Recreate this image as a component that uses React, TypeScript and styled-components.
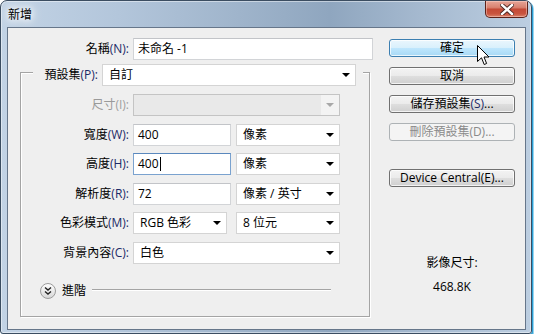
import React from 'react';
import styled, { createGlobalStyle, css } from 'styled-components';

const FONT = `"Open Sans", "Noto Sans CJK TC", sans-serif`;

const GlobalStyle = createGlobalStyle`
  html, body {
    margin: 0;
    padding: 0;
    background: #fff;
  }
  body {
    font-family: ${FONT};
    font-size: 12px;
    color: #000;
  }
`;

const Window = styled.div`
  width: 532px;
  height: 334px;
  box-sizing: border-box;
  border: 1px solid #3b4d61;
  border-radius: 7px 7px 3px 3px;
  background: linear-gradient(90deg, #c2d3e5 0%, #b3c6db 22%, #9fb4cb 45%, #8fa6bf 62%, #a6bad0 80%, #bccee1 100%);
  box-shadow: inset 0 0 0 1px rgba(255, 255, 255, 0.45), 1px 1px 0 #2b9fd5, 2px 2px 0 #9ad5ee;
  display: flex;
  flex-direction: column;
  overflow: hidden;
`;

const TitleBar = styled.div`
  height: 26px;
  display: flex;
  align-items: flex-start;
`;

const Title = styled.div`
  margin: 5px 0 0 7px;
  font-family: "Noto Sans CJK TC", sans-serif;
  font-size: 12px;
  line-height: 16px;
  color: #000;
  text-shadow: 0 0 6px #fff, 0 0 10px #fff, 0 0 14px #fff;
`;

const CloseButton = styled.div`
  margin-left: auto;
  margin-right: 3px;
  width: 43px;
  height: 17px;
  box-sizing: border-box;
  border: 1px solid #5d2219;
  border-top: none;
  border-radius: 0 0 5px 5px;
  background: linear-gradient(#e6a597 0%, #d98270 40%, #c44a36 52%, #c9553f 80%, #d9826a 100%);
  box-shadow: inset 0 0 0 1px rgba(255, 220, 210, 0.45);
  display: flex;
  align-items: center;
  justify-content: center;
`;

const Client = styled.div`
  flex: 1;
  margin: 0 5px 3px 6px;
  border: 1px solid #66768a;
  background: #efefef;
  display: flex;
  padding-top: 10px;
`;

const LeftPanel = styled.div`
  width: 381px;
  display: flex;
  flex-direction: column;
`;

const NameRow = styled.div`
  display: grid;
  grid-template-columns: 121px 240px;
  column-gap: 4px;
  align-items: center;
  height: 22px;
`;

const Label = styled.div<{ $disabled?: boolean }>`
  text-align: right;
  white-space: nowrap;
  line-height: 22px;
  color: ${(p) => (p.$disabled ? '#9a9a9a' : '#000')};
`;

const Key = styled.span<{ $disabled?: boolean }>`
  color: ${(p) => (p.$disabled ? '#a0a0a0' : '#1c2a66')};
`;

const fieldBase = css`
  height: 22px;
  box-sizing: border-box;
  display: flex;
  align-items: center;
  white-space: nowrap;
  line-height: 16px;
`;

const TextBox = styled.div<{ $width?: number; $focused?: boolean }>`
  ${fieldBase};
  width: ${(p) => (p.$width ? `${p.$width}px` : '100%')};
  padding: 0 4px;
  background: #fff;
  border: 1px solid ${(p) => (p.$focused ? '#7aa2cf' : '#d2d4d7')};
  border-top-color: ${(p) => (p.$focused ? '#5a88bd' : '#c2c4c8')};
`;

const Caret = styled.span`
  display: inline-block;
  width: 1px;
  height: 14px;
  margin-left: 1px;
  background: #000;
`;

const SelectBox = styled.div<{ $width: number; $disabled?: boolean }>`
  ${fieldBase};
  width: ${(p) => p.$width}px;
  padding-left: 6px;
  background: ${(p) => (p.$disabled ? '#e9e9e9' : '#fff')};
  border: 1px solid ${(p) => (p.$disabled ? '#c4c4c4' : '#d4d4d4')};
`;

const SelectText = styled.span`
  flex: 1;
`;

const ArrowBox = styled.div<{ $disabled?: boolean }>`
  width: 18px;
  height: 100%;
  display: flex;
  align-items: center;
  justify-content: center;
  background: ${(p) => (p.$disabled ? '#f3f3f3' : 'transparent')};
  &::after {
    content: '';
    border-left: 4px solid transparent;
    border-right: 4px solid transparent;
    border-top: 4px solid ${(p) => (p.$disabled ? '#a8a8a8' : '#000')};
  }
`;

const Group = styled.div`
  margin: 12px 0 0 12px;
  width: 350px;
  box-sizing: border-box;
  border: 1px solid #a4a4a4;
  box-shadow: inset 1px 1px 0 #fff, 1px 1px 0 #fff;
  padding-bottom: 16px;
`;

const GroupHeader = styled.div`
  margin: -9px 0 0 12px;
  width: 330px;
  box-sizing: border-box;
  padding: 0 7px;
  background: #efefef;
  display: flex;
  align-items: center;
  gap: 4px;
  & > ${Label} {
    flex: 1;
  }
`;

const FormGrid = styled.div`
  margin-top: 8px;
  display: grid;
  grid-template-columns: 108px 207px;
  grid-auto-rows: 22px;
  row-gap: 7.5px;
  column-gap: 4px;
`;

const Pair = styled.div<{ $gap: number }>`
  display: flex;
  gap: ${(p) => p.$gap}px;
`;

const AdvancedRow = styled.div`
  margin: 19px 38px 0 19px;
  display: flex;
  align-items: center;
  height: 17px;
`;

const AdvancedText = styled.span`
  margin: 0 6px;
  line-height: 16px;
`;

const Rule = styled.div`
  flex: 1;
  height: 1px;
  margin-bottom: 3px;
  background: #a4a4a4;
  border-bottom: 1px solid #fff;
`;

const RightPanel = styled.div`
  position: relative;
  width: 126px;
  padding-top: 1px;
  display: flex;
  flex-direction: column;
  gap: 10px;
`;

const Button = styled.div<{ $variant?: 'hot' | 'disabled'; $spaceAbove?: number }>`
  height: 18px;
  box-sizing: border-box;
  border-radius: 3px;
  text-align: center;
  line-height: 16px;
  white-space: nowrap;
  margin-top: ${(p) => p.$spaceAbove ?? 0}px;
  border: 1px solid #707070;
  color: #000;
  background: linear-gradient(#f3f3f3 0%, #ebebeb 48%, #dedede 52%, #cfcfcf 100%);
  box-shadow: inset 0 0 0 1px rgba(255, 255, 255, 0.75);
  ${(p) =>
    p.$variant === 'hot' &&
    css`
      border-color: #3c7fb1;
      background: linear-gradient(#eaf6fd 0%, #d9f0fc 48%, #bee6fd 52%, #a7d9f5 100%);
    `}
  ${(p) =>
    p.$variant === 'disabled' &&
    css`
      border-color: #adb2b5;
      background: #f4f4f4;
      color: #8a8a8a;
      box-shadow: none;
    `}
`;

const ImageSize = styled.div`
  margin-top: 59px;
  display: flex;
  flex-direction: column;
  align-items: center;
  gap: 10px;
  line-height: 14px;
`;

const Cursor = styled.svg`
  position: absolute;
  left: 88px;
  top: 7px;
`;

const Select: React.FC<{ width: number; text?: string; disabled?: boolean }> = ({ width, text, disabled }) => (
  <SelectBox $width={width} $disabled={disabled}>
    <SelectText>{text}</SelectText>
    <ArrowBox $disabled={disabled} />
  </SelectBox>
);

const FieldLabel: React.FC<{ text: string; mn: string; disabled?: boolean }> = ({ text, mn, disabled }) => (
  <Label $disabled={disabled}>
    {text}
    <Key $disabled={disabled}>({mn}):</Key>
  </Label>
);

const App: React.FC = () => {
  return (
    <>
      <GlobalStyle />
      <Window>
        <TitleBar>
          <Title>新增</Title>
          <CloseButton>
            <svg width="14" height="11" viewBox="0 0 14 11">
              <path d="M2 1 L12 10 M12 1 L2 10" stroke="#4a2420" strokeWidth="4.2" strokeLinecap="square" />
              <path d="M2 1 L12 10 M12 1 L2 10" stroke="#fff" strokeWidth="2.4" strokeLinecap="square" />
            </svg>
          </CloseButton>
        </TitleBar>
        <Client>
          <LeftPanel>
            <NameRow>
              <FieldLabel text="名稱" mn="N" />
              <TextBox>未命名 -1</TextBox>
            </NameRow>

            <Group>
              <GroupHeader>
                <FieldLabel text="預設集" mn="P" />
                <Select width={254} text="自訂" />
              </GroupHeader>

              <FormGrid>
                <FieldLabel text="尺寸" mn="I" disabled />
                <Select width={207} disabled />

                <FieldLabel text="寬度" mn="W" />
                <Pair $gap={5}>
                  <TextBox $width={98}>400</TextBox>
                  <Select width={104} text="像素" />
                </Pair>

                <FieldLabel text="高度" mn="H" />
                <Pair $gap={5}>
                  <TextBox $width={98} $focused>
                    400<Caret />
                  </TextBox>
                  <Select width={104} text="像素" />
                </Pair>

                <FieldLabel text="解析度" mn="R" />
                <Pair $gap={5}>
                  <TextBox $width={98}>72</TextBox>
                  <Select width={104} text="像素 / 英寸" />
                </Pair>

                <FieldLabel text="色彩模式" mn="M" />
                <Pair $gap={9}>
                  <Select width={94} text="RGB 色彩" />
                  <Select width={104} text="8 位元" />
                </Pair>

                <FieldLabel text="背景內容" mn="C" />
                <Select width={207} text="白色" />
              </FormGrid>

              <AdvancedRow>
                <svg width="16" height="16" viewBox="0 0 16 16">
                  <defs>
                    <linearGradient id="adv" x1="0" y1="0" x2="0" y2="1">
                      <stop offset="0" stopColor="#ffffff" />
                      <stop offset="1" stopColor="#d6d6d6" />
                    </linearGradient>
                  </defs>
                  <circle cx="8" cy="8" r="7.5" fill="url(#adv)" stroke="#9b9b9b" />
                  <path d="M5 4.5 L8 7 L11 4.5 M5 8.5 L8 11 L11 8.5" fill="none" stroke="#222" strokeWidth="1.4" />
                </svg>
                <AdvancedText>進階</AdvancedText>
                <Rule />
              </AdvancedRow>
            </Group>
          </LeftPanel>

          <RightPanel>
            <Button $variant="hot">確定</Button>
            <Button>取消</Button>
            <Button>
              儲存預設集<Key>(S)</Key>...
            </Button>
            <Button $variant="disabled">刪除預設集(D)...</Button>
            <Button $spaceAbove={18}>Device Central(E)...</Button>
            <ImageSize>
              <span>影像尺寸:</span>
              <span>468.8K</span>
            </ImageSize>
            <Cursor width="13" height="21" viewBox="0 0 13 21">
              <path
                d="M0.5 0.5 L0.5 16.5 L4.5 12.8 L7.2 19.5 L9.6 18.5 L7 12 L12 12 Z"
                fill="#fff"
                stroke="#000"
                strokeWidth="1"
                strokeLinejoin="miter"
              />
            </Cursor>
          </RightPanel>
        </Client>
      </Window>
    </>
  );
};

export default App;
